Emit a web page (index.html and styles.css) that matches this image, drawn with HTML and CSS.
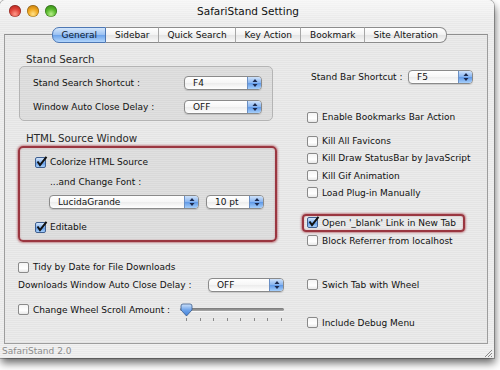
FILE: index.html
```html
<!DOCTYPE html>
<html>
<head>
<meta charset="utf-8">
<link rel="stylesheet" href="styles.css">
</head>
<body>
<div class="window">
  <div class="titlebar">
    <div class="lights">
      <span class="light red"></span>
      <span class="light yellow"></span>
      <span class="light green"></span>
    </div>
    <div class="title">SafariStand Setting</div>
    <div></div>
  </div>
  <div class="tabs">
    <span class="tab first sel">General</span>
    <span class="tab">Sidebar</span>
    <span class="tab">Quick Search</span>
    <span class="tab">Key Action</span>
    <span class="tab">Bookmark</span>
    <span class="tab last">Site Alteration</span>
  </div>
  <div class="pane">
    <div class="col left">
      <div class="heading">Stand Search</div>
      <div class="group g1">
        <div class="row"><span class="lbl w151">Stand Search Shortcut :</span><span class="popup w78"><span class="pv">F4</span><span class="arr"><svg width="6" height="10" viewBox="0 0 6 10"><path d="M3 1 L5.5 4 H0.5Z M3 9 L5.5 6 H0.5Z" fill="#1d2b4f"/></svg></span></span></div>
        <div class="row"><span class="lbl w151">Window Auto Close Delay :</span><span class="popup w78"><span class="pv">OFF</span><span class="arr"><svg width="6" height="10" viewBox="0 0 6 10"><path d="M3 1 L5.5 4 H0.5Z M3 9 L5.5 6 H0.5Z" fill="#1d2b4f"/></svg></span></span></div>
      </div>
      <div class="heading h2">HTML Source Window</div>
      <div class="group g2 hl">
        <div class="row"><span class="cb on"><svg width="13" height="12" viewBox="0 0 13 12"><path d="M2.5 5.5 L5 9 L11.5 0.8" fill="none" stroke="#111" stroke-width="2"/></svg></span><span class="txt">Colorize HTML Source</span></div>
        <div class="row r-font"><span class="txt">...and Change Font :</span></div>
        <div class="row r-pops"><span class="popup w150"><span class="pv">LucidaGrande</span><span class="arr"><svg width="6" height="10" viewBox="0 0 6 10"><path d="M3 1 L5.5 4 H0.5Z M3 9 L5.5 6 H0.5Z" fill="#1d2b4f"/></svg></span></span><span class="popup w58"><span class="pv">10 pt</span><span class="arr"><svg width="6" height="10" viewBox="0 0 6 10"><path d="M3 1 L5.5 4 H0.5Z M3 9 L5.5 6 H0.5Z" fill="#1d2b4f"/></svg></span></span></div>
        <div class="row r-edit"><span class="cb on"><svg width="13" height="12" viewBox="0 0 13 12"><path d="M2.5 5.5 L5 9 L11.5 0.8" fill="none" stroke="#111" stroke-width="2"/></svg></span><span class="txt">Editable</span></div>
      </div>
      <div class="row r-tidy"><span class="cb"></span><span class="txt">Tidy by Date for File Downloads</span></div>
      <div class="row r-dl"><span class="lbl w190">Downloads Window Auto Close Delay :</span><span class="popup w76"><span class="pv">OFF</span><span class="arr"><svg width="6" height="10" viewBox="0 0 6 10"><path d="M3 1 L5.5 4 H0.5Z M3 9 L5.5 6 H0.5Z" fill="#1d2b4f"/></svg></span></span></div>
      <div class="row r-wheel"><span class="cb"></span><span class="txt w147">Change Wheel Scroll Amount :</span>
        <span class="slider">
          <span class="track"></span>
          <svg class="knob" width="13" height="14" viewBox="0 0 13 14"><defs><linearGradient id="kg" x1="0" y1="0" x2="0" y2="1"><stop offset="0" stop-color="#cfe3fb"/><stop offset="0.5" stop-color="#6fa4ea"/><stop offset="1" stop-color="#3f7fd8"/></linearGradient></defs><path d="M1 3 Q1 1 3 1 H10 Q12 1 12 3 V7 L6.5 13 L1 7Z" fill="url(#kg)" stroke="#3a5a8a" stroke-width="0.8"/></svg>
          <span class="ticks"><i></i><i></i><i></i><i></i><i></i><i></i><i></i><i></i></span>
        </span>
      </div>
    </div>
    <div class="col right">
      <div class="row r-bar"><span class="lbl w97">Stand Bar Shortcut :</span><span class="popup w65"><span class="pv">F5</span><span class="arr"><svg width="6" height="10" viewBox="0 0 6 10"><path d="M3 1 L5.5 4 H0.5Z M3 9 L5.5 6 H0.5Z" fill="#1d2b4f"/></svg></span></span></div>
      <div class="row ck r-enable"><span class="cb"></span><span class="txt">Enable Bookmarks Bar Action</span></div>
      <div class="row ck r-kill1"><span class="cb"></span><span class="txt">Kill All Favicons</span></div>
      <div class="row ck r-kill"><span class="cb"></span><span class="txt">Kill Draw StatusBar by JavaScript</span></div>
      <div class="row ck r-kill"><span class="cb"></span><span class="txt">Kill Gif Animation</span></div>
      <div class="row ck r-kill"><span class="cb"></span><span class="txt">Load Plug-in Manually</span></div>
      <div class="row ck hl r-blank"><span class="cb on"><svg width="13" height="12" viewBox="0 0 13 12"><path d="M2.5 5.5 L5 9 L11.5 0.8" fill="none" stroke="#111" stroke-width="2"/></svg></span><span class="txt">Open '_blank' Link in New Tab</span></div>
      <div class="row ck r-block"><span class="cb"></span><span class="txt">Block Referrer from localhost</span></div>
      <div class="row ck r-swich"><span class="cb"></span><span class="txt">Swich Tab with Wheel</span></div>
      <div class="row ck r-debug"><span class="cb"></span><span class="txt">Include Debug Menu</span></div>
    </div>
  </div>
  <div class="status">
    <span class="stxt">SafariStand 2.0</span>
    <svg class="grip" width="10" height="10" viewBox="0 0 10 10"><path d="M9 2 L2 9 M9 5 L5 9 M9 8 L8 9" stroke="#8a8a8a" stroke-width="1"/></svg>
  </div>
</div>
</body>
</html>
```
FILE: styles.css
```css
html, body {
  margin: 0;
  padding: 0;
  background: #ffffff;
}
body {
  width: 500px;
  height: 370px;
  overflow: hidden;
  font-family: "DejaVu Sans", "Liberation Sans", sans-serif;
  font-size: 9px;
  color: #111111;
}
.window {
  width: 494px;
  height: 358px;
  display: flex;
  flex-direction: column;
  border-radius: 6px 6px 0 0;
  overflow: hidden;
  background: repeating-linear-gradient(#efefef 0 1px, #e8e8e8 1px 2px);
  box-shadow: 0 0 0 1px rgba(0,0,0,0.25), 1px 5px 8px rgba(0,0,0,0.6);
}
.titlebar {
  height: 24px;
  display: grid;
  grid-template-columns: 1fr auto 1fr;
  align-items: start;
  background: linear-gradient(rgba(255,255,255,0.55), rgba(255,255,255,0));
}
.lights {
  display: flex;
  gap: 6px;
  padding: 5px 0 0 9px;
}
.light {
  width: 12px;
  height: 12px;
  border-radius: 50%;
  box-shadow: inset 0 0 0 0.6px rgba(0,0,0,0.35);
}
.red { background: radial-gradient(circle at 50% 75%, #ff9a8a 0, #e0443a 45%, #a11a14 100%); }
.yellow { background: radial-gradient(circle at 50% 75%, #ffe28a 0, #f0a820 45%, #b06a08 100%); }
.green { background: radial-gradient(circle at 50% 75%, #b8f08a 0, #58b82c 45%, #2a7a10 100%); }
.title {
  font-size: 10.5px;
  line-height: 12px;
  padding-top: 5px;
  color: #111111;
  margin-left: 2px;
}
.tabs {
  display: flex;
  margin: 3px 0 -9px 52px;
  height: 16px;
  position: relative;
  z-index: 1;
}
.tab {
  padding: 0 8.5px;
  height: 14px;
  line-height: 14px;
  border-top: 1px solid #8c8c8c;
  border-bottom: 1px solid #8c8c8c;
  border-right: 1px solid #a6a6a6;
  background: linear-gradient(#ffffff, #f2f2f2 50%, #e4e4e4 51%, #f8f8f8);
  color: #111111;
}
.tab.first {
  border-left: 1px solid #8c8c8c;
  border-radius: 7px 0 0 7px;
}
.tab.last {
  border-right: 1px solid #8c8c8c;
  border-radius: 0 7px 7px 0;
}
.tab.sel {
  background: linear-gradient(#d4e6fb, #98c0f2 50%, #6ba2ea 51%, #b2d6fc);
  border-color: #4d77b3;
  color: #0c1a30;
}
.pane {
  flex: 1;
  margin: 0 6px 0 4px;
  border: 1px solid #9d9d9d;
  border-top-color: #8f8f8f;
  background: repeating-linear-gradient(#ebebeb 0 1px, #e4e4e4 1px 2px);
  display: grid;
  grid-template-columns: 284px 1fr;
  padding: 17px 0 0 13px;
  box-sizing: border-box;
}
.col {
  display: flex;
  flex-direction: column;
}
.heading {
  height: 14px;
  line-height: 14px;
  font-size: 10.3px;
  color: #2a2a2a;
  padding-left: 8px;
}
.h2 { margin-top: 10px; }
.group {
  box-sizing: border-box;
  border: 1px solid #b4b4b4;
  border-radius: 5px;
  background: repeating-linear-gradient(#e0e0e0 0 1px, #d9d9d9 1px 2px);
  display: flex;
  flex-direction: column;
}
.g1 {
  margin-left: 1px;
  width: 254px;
  height: 55px;
  padding: 9px 0 0 13px;
  gap: 10px;
}
.g2 {
  margin-top: 1px;
  width: 259px;
  height: 96px;
  padding: 7px 0 0 15px;
}
.hl {
  border: 2px solid #9a3640;
  box-shadow: 0 0 2px 1px rgba(170,60,70,0.55), inset 0 0 2px rgba(170,60,70,0.4);
}
.row {
  display: flex;
  align-items: center;
  height: 14px;
  line-height: 14px;
  white-space: nowrap;
}
.lbl { flex: 0 0 auto; }
.w151 { width: 151px; }
.w190 { width: 190px; }
.w97 { width: 97px; }
.w147 { width: 147px; }
.txt { margin-left: 4px; }
.r-font { margin-top: 6px; }
.r-font .txt { margin-left: 15px; }
.r-pops { margin-top: 6px; padding-left: 14px; gap: 7px; }
.r-edit { margin-top: 11px; }
.r-tidy { margin-top: 18px; }
.r-dl { margin-top: 4px; }
.r-wheel { margin-top: 11px; align-items: flex-start; height: 20px; }
.r-wheel .cb { margin-top: 1px; }
.popup {
  box-sizing: border-box;
  height: 14px;
  border: 1px solid #8a8a8a;
  border-radius: 4px;
  background: linear-gradient(#ffffff, #f6f6f6 50%, #ececec 51%, #ffffff);
  display: flex;
  align-items: center;
  justify-content: space-between;
  overflow: hidden;
  box-shadow: 0 1px 1px rgba(0,0,0,0.12);
}
.w78 { width: 78px; }
.w150 { width: 150px; }
.w58 { width: 58px; }
.w76 { width: 76px; }
.w65 { width: 65px; }
.pv { padding-left: 8px; line-height: 12px; }
.arr {
  width: 13px;
  height: 12px;
  display: flex;
  align-items: center;
  justify-content: center;
  background: linear-gradient(#cfe2fa, #86b3ef 50%, #5f98e6 51%, #a6cffb);
  border-left: 1px solid #6a8fc4;
}
.cb {
  box-sizing: border-box;
  width: 11px;
  height: 11px;
  flex: 0 0 11px;
  border: 1px solid #8a8a8a;
  border-radius: 2px;
  background: linear-gradient(#f4f4f4, #ffffff 60%, #e8e8e8);
  position: relative;
}
.cb.on {
  border-color: #3f5f90;
  background: linear-gradient(#d4e6fb, #7fb0ef 50%, #5b95e4 51%, #a6cffb);
}
.cb svg {
  position: absolute;
  left: -1px;
  top: -2px;
}
.slider {
  position: relative;
  display: flex;
  flex-direction: column;
  margin-left: 0;
  width: 104px;
  height: 20px;
}
.track {
  margin-top: 5px;
  height: 3px;
  border-radius: 2px;
  background: linear-gradient(#777, #aaa);
  box-shadow: 0 1px 0 rgba(255,255,255,0.7);
}
.knob {
  position: absolute;
  left: 0;
  top: 0;
}
.ticks {
  display: flex;
  justify-content: space-between;
  padding: 0 2px 0 6px;
  margin-top: 7px;
}
.ticks i {
  width: 1px;
  height: 3px;
  background: #8a8a8a;
}
.right { padding-left: 5px; }
.r-bar { margin-top: 18px; padding-left: 4px; }
.r-enable { margin-top: 26px; }
.r-kill1 { margin-top: 10px; }
.r-kill { margin-top: 3.3px; }
.r-blank {
  box-sizing: border-box;
  margin-top: 14px;
  margin-left: -5px;
  width: 163px;
  height: 18px;
  border-radius: 4px;
  padding-left: 3px;
}
.r-block { margin-top: 2px; }
.r-swich { margin-top: 30px; }
.r-debug { margin-top: 24px; }
.status {
  height: 14px;
  display: flex;
  align-items: center;
  justify-content: space-between;
  background: repeating-linear-gradient(#f1f1f1 0 1px, #eaeaea 1px 2px);
}
.stxt {
  padding-left: 2px;
  color: #8c8c8c;
  font-size: 9px;
}
.grip { margin-right: 1px; align-self: flex-end; }
```
